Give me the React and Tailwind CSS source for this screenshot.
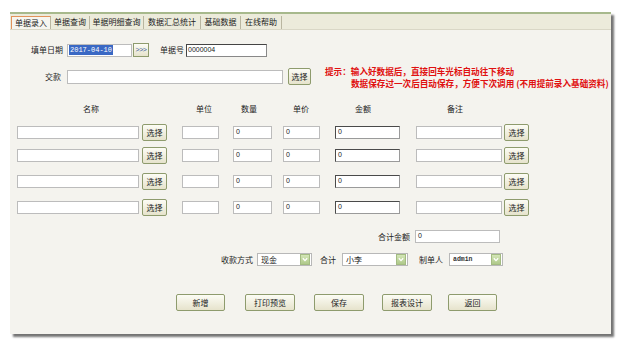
import React from "react";

const Inp = ({ className = "", children }) => (
  <div className={"h-[13px] bg-white border border-[#bcbcbc] flex items-center pl-[2px] text-[7px] font-['Liberation_Sans',sans-serif] text-[#222] " + className}>
    {children}
  </div>
);

const Btn = ({ className = "", children }) => (
  <div className={"h-[17px] border border-[#8e9b6d] rounded-[2px] bg-linear-to-b from-[#fcfcf5] to-[#e6e3cc] flex items-center justify-center text-[8px] text-[#222] whitespace-nowrap " + className}>
    {children}
  </div>
);

const Sel = ({ className = "", children, mono = false }) => (
  <div className={"h-[13px] bg-white border border-[#b8b8b8] flex items-center justify-between " + className}>
    <span className={mono ? "pl-[3px] text-[6.5px] font-['Liberation_Mono',monospace] font-bold text-[#333]" : "pl-[3px] text-[8px] text-[#222]"}>{children}</span>
    <div className="w-[10px] h-[11px] mr-[1px] bg-linear-to-b from-[#d3e6b6] to-[#afc98a] border border-[#a3bb82] flex items-center justify-center">
      <svg width="6" height="5" viewBox="0 0 6 5"><path d="M0.8 1.2 L3 3.6 L5.2 1.2" stroke="#ffffff" strokeWidth="1.3" fill="none" /></svg>
    </div>
  </div>
);

const DataRow = ({ className = "" }) => (
  <div className={"flex items-center h-[17px] " + className}>
    <Inp className="ml-[7px] w-[122px]" />
    <Btn className="ml-[3px] w-[25px]">选择</Btn>
    <Inp className="ml-[15px] w-[37px]" />
    <Inp className="ml-[14px] w-[39px]">0</Inp>
    <Inp className="ml-[11px] w-[37px]">0</Inp>
    <div className="ml-[15px] w-[65px] h-[13px] bg-white border border-[#4a4a4a] border-r-[#9a9a9a] border-b-[#9a9a9a] flex items-center pl-[2px] text-[7px] font-['Liberation_Sans',sans-serif] text-[#222]">0</div>
    <Inp className="ml-[16px] w-[86px]" />
    <Btn className="ml-[2px] w-[25px]">选择</Btn>
  </div>
);

export default function App() {
  return (
    <div className="w-[621px] h-[347px] bg-white pt-[12px] pl-[10px] font-['Noto_Sans_CJK_SC',sans-serif] text-[#222] overflow-hidden">
      <div className="w-[601px] h-[322px] flex flex-col shadow-[3px_3px_2px_rgba(0,0,0,0.55)] bg-[#f4f3ee] overflow-hidden">
        <div className="h-[2px] bg-[#a7b98c]" />
        <div className="h-[15px] bg-[#ecebdb] flex items-end text-[8px] leading-[12px]">
          <div className="ml-[1px] h-[13px] w-[40px] bg-[#f6f5ef] border-l border-t border-[#e2935a] border-r border-r-[#b9b6a0] text-center">单据录入</div>
          <div className="h-[13px] w-[39px] border-r border-[#b9b6a0] text-center">单据查询</div>
          <div className="h-[13px] w-[54px] border-r border-[#b9b6a0] text-center">单据明细查询</div>
          <div className="h-[13px] w-[57px] border-r border-[#b9b6a0] text-center">数据汇总统计</div>
          <div className="h-[13px] w-[40px] border-r border-[#b9b6a0] text-center">基础数据</div>
          <div className="h-[13px] w-[41px] border-r border-[#b9b6a0] text-center">在线帮助</div>
        </div>
        <div className="h-[1px] bg-[#d9d7c6]" />
        <div className="flex-1 flex flex-col text-[8px]">
          {/* Row A */}
          <div className="flex items-center h-[14px] mt-[13px]">
            <span className="ml-[21px] w-[32px] text-right whitespace-nowrap">填单日期</span>
            <div className="ml-[4px] w-[65px] h-[13px] bg-white border border-[#bcbcbc] flex items-center pl-[1px]">
              <span className="bg-[#3a68c4] text-white text-[7px] leading-[10px] font-['Liberation_Mono',monospace] px-[1px]">2017-04-10</span>
            </div>
            <div className="ml-[1px] w-[16px] h-[14px] border border-[#8e9b6d] bg-linear-to-b from-[#fcfcf5] to-[#e6e3cc] flex items-center justify-center text-[7px] text-[#3c5a9a] font-['Liberation_Sans',sans-serif] tracking-[-0.5px]">&gt;&gt;&gt;</div>
            <span className="ml-[11px] w-[23px] whitespace-nowrap">单据号</span>
            <div className="ml-[3px] w-[81px] h-[13px] bg-white border border-[#444] border-r-[#888] border-b-[#888] flex items-center pl-[1px] text-[7px] font-['Liberation_Sans',sans-serif]">0000004</div>
          </div>
          {/* Row B */}
          <div className="flex items-center h-[17px] mt-[11px]">
            <span className="ml-[35px] w-[17px] whitespace-nowrap">交款</span>
            <Inp className="ml-[5px] w-[216px] h-[14px]" />
            <Btn className="ml-[5px] w-[23px]">选择</Btn>
            <div className="ml-[14px] flex flex-col text-[#e01010] font-bold text-[8.6px] leading-[12px] whitespace-nowrap">
              <span>提示：输入好数据后，直接回车光标自动往下移动</span>
              <span className="pl-[26px]">数据保存过一次后自动保存，方便下次调用 (不用提前录入基础资料)</span>
            </div>
          </div>
          {/* Headers */}
          <div className="flex items-center h-[11px] mt-[18px] whitespace-nowrap">
            <span className="ml-[73px] w-[17px]">名称</span>
            <span className="ml-[96px] w-[15px]">单位</span>
            <span className="ml-[30px] w-[17px]">数量</span>
            <span className="ml-[35px] w-[17px]">单价</span>
            <span className="ml-[45px] w-[16px]">金额</span>
            <span className="ml-[76px] w-[16px]">备注</span>
          </div>
          <DataRow className="mt-[10px]" />
          <DataRow className="mt-[6px]" />
          <DataRow className="mt-[9px]" />
          <DataRow className="mt-[9px]" />
          {/* total */}
          <div className="flex items-center h-[13px] mt-[14px]">
            <span className="ml-[368px] w-[33px] whitespace-nowrap">合计金额</span>
            <Inp className="ml-[4px] w-[85px]">0</Inp>
          </div>
          {/* selects */}
          <div className="flex items-center h-[13px] mt-[10px] whitespace-nowrap">
            <span className="ml-[211px] w-[32px]">收款方式</span>
            <Sel className="ml-[4px] w-[55px]">现金</Sel>
            <span className="ml-[8px] w-[17px]">合计</span>
            <Sel className="ml-[5px] w-[66px]">小李</Sel>
            <span className="ml-[11px] w-[24px]">制单人</span>
            <Sel className="ml-[6px] w-[54px]" mono>admin</Sel>
          </div>
          {/* buttons */}
          <div className="flex items-center h-[17px] mt-[28px]">
            <Btn className="ml-[166px] w-[49px]">新增</Btn>
            <Btn className="ml-[20px] w-[50px]">打印预览</Btn>
            <Btn className="ml-[19px] w-[50px]">保存</Btn>
            <Btn className="ml-[18px] w-[50px]">报表设计</Btn>
            <Btn className="ml-[16px] w-[49px]">返回</Btn>
          </div>
        </div>
      </div>
    </div>
  );
}
